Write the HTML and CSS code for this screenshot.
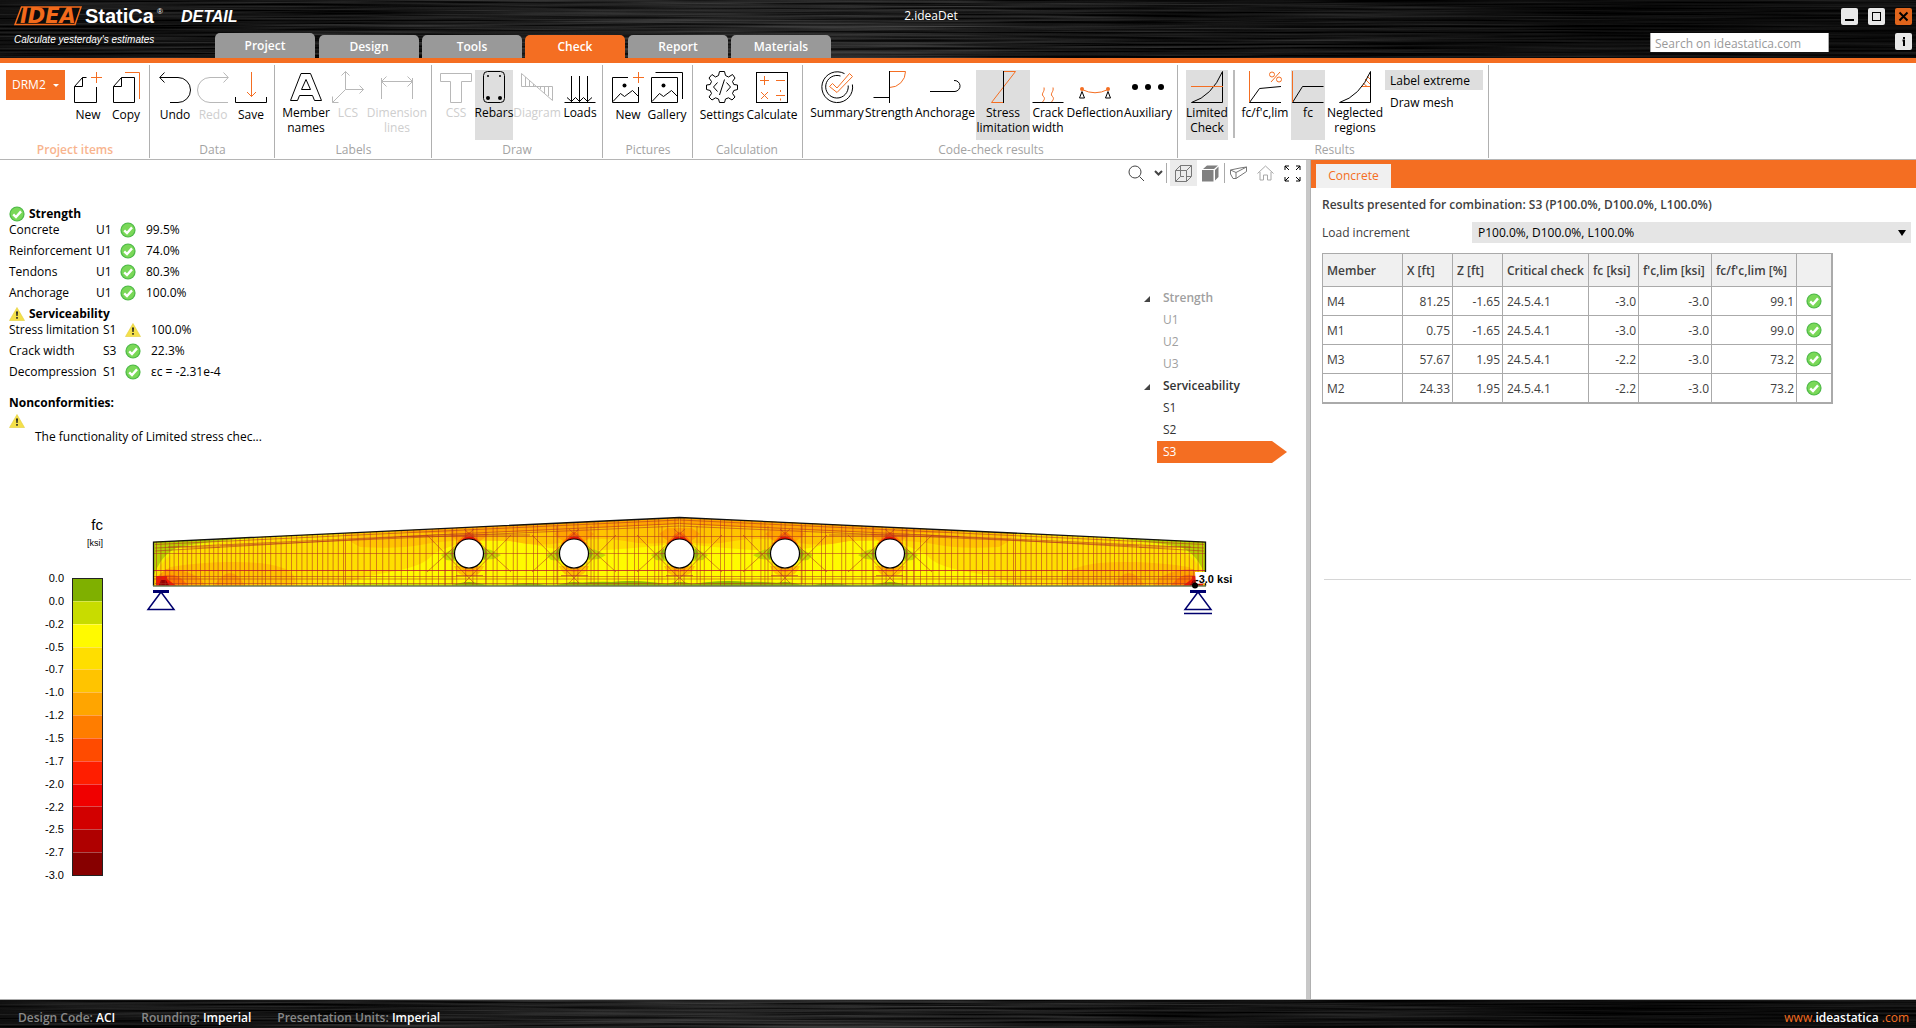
FILE: index.html
```html
<!DOCTYPE html>
<html lang="en">
<head>
<meta charset="utf-8">
<title>IDEA StatiCa Detail - 2.ideaDet</title>
<link rel="stylesheet" href="styles.css">
</head>
<body>
<svg class="defs" width="0" height="0" aria-hidden="true">
  <filter id="brushed" x="0" y="0" width="100%" height="100%" color-interpolation-filters="sRGB">
    <feTurbulence type="fractalNoise" baseFrequency="0.004 0.5" numOctaves="3" seed="7"/>
    <feColorMatrix values=".55 0 0 0 -0.16  .55 0 0 0 -0.16  .55 0 0 0 -0.16  0 0 0 0 1"/>
  </filter>
  <symbol id="ok" viewBox="0 0 16 16"><circle cx="8" cy="8" r="7.6" fill="#4fb94a"/><circle cx="8" cy="8" r="6.4" fill="#7ad858"/><path d="M4.2 8.3L7 11L12 5.4" fill="none" stroke="#fff" stroke-width="2.4"/></symbol>
  <symbol id="warn" viewBox="0 0 16 16"><path d="M8 1.500L15.500 14.500H.500Z" fill="#f4e04a" stroke="#e3cf3c" stroke-width=".6"/><path d="M7 5.500H9L8.600 10H7.400ZM7.200 11H8.800V12.800H7.200Z" fill="#222"/></symbol>
</svg>

<header class="titlebar">
  <svg class="texture" aria-hidden="true"><rect width="100%" height="100%" filter="url(#brushed)"/></svg>
  <div class="brand">
    <svg width="230" height="44" viewBox="0 0 230 44" role="img" aria-label="IDEA StatiCa Detail">
      <path d="M7.500 1H67L61 18.500H1Z" fill="#0c0c0c" stroke="#f26a1b" stroke-width="1.500"/>
      <text x="6" y="17" class="logo-idea">IDEA</text>
      <text x="71" y="17" class="logo-name">StatiCa</text>
      <text x="143" y="8" class="logo-reg">®</text>
      <text x="167" y="16" class="logo-app">DETAIL</text>
      <text x="0" y="37" class="logo-tag">Calculate yesterday's estimates</text>
    </svg>
  </div>
  <div class="titlebar-mid">
    <h1 class="doc-title">2.ideaDet</h1>
    <nav class="tabs">
      <button class="tab tab-first">Project</button>
      <button class="tab">Design</button>
      <button class="tab">Tools</button>
      <button class="tab tab-active">Check</button>
      <button class="tab">Report</button>
      <button class="tab">Materials</button>
    </nav>
  </div>
  <div class="titlebar-tools">
    <div class="win-buttons">
      <button class="win" aria-label="Minimize"><svg width="17" height="17"><path d="M4 12H13" stroke="#000" stroke-width="2"/></svg></button>
      <button class="win" aria-label="Maximize"><svg width="17" height="17"><rect x="4.500" y="4.500" width="8" height="8" fill="none" stroke="#000"/></svg></button>
      <button class="win win-close" aria-label="Close"><svg width="17" height="17"><path d="M4.500 4.500L12.500 12.500M12.500 4.500L4.500 12.500" stroke="#000" stroke-width="2"/></svg></button>
    </div>
    <div class="search-row">
      <input class="search" type="text" placeholder="Search on ideastatica.com" aria-label="Search on ideastatica.com">
      <button class="win" aria-label="Information"><svg width="17" height="17"><path d="M9 4V6M7.500 7.500H9V13" fill="none" stroke="#000" stroke-width="2"/></svg></button>
    </div>
  </div>
</header>

<section class="ribbon">
  <div class="group g1 low">
    <div class="items">
      <button class="project-drop">DRM2<span class="drop-arrow"></span></button>
      <button class="tool w38"><svg class="ic"><path d="M2.500 15.500L10.500 6.500H14.500M10.500 6.500V15.500H2.500V31.500H24.500V16"/><path class="o" d="M24.500 1V12M19 6.500H30"/></svg><span>New</span></button>
      <button class="tool w38"><svg class="ic"><path d="M3.500 15.500L11.500 6.500H24.500V31.500H3.500ZM11.500 6.500V15.500H3.500"/><path class="o" d="M15 1.500H29.500V28"/></svg><span>Copy</span></button>
    </div>
    <h2 class="group-label accent">Project items</h2>
  </div>
  <div class="group g2 low">
    <div class="items">
      <button class="tool w38"><svg class="ic"><path d="M5.500 1.500L.700 6.500L5.500 11.500M1 6.500H19A12.500 12.500 0 0 1 19 31.500H11"/></svg><span>Undo</span></button>
      <button class="tool w38" disabled><svg class="ic"><path d="M26.500 1.500L31.300 6.500L26.500 11.500M31 6.500H13A12.500 12.500 0 0 0 13 31.500H31"/></svg><span>Redo</span></button>
      <button class="tool w38"><svg class="ic"><path d="M.500 26V31.500H31.500V26"/><path class="o" d="M16.500 1V25.500M12 21L16.500 25.500L21 21"/></svg><span>Save</span></button>
    </div>
    <h2 class="group-label">Data</h2>
  </div>
  <div class="group g3">
    <div class="items">
      <button class="tool w50"><svg class="ic"><path d="M.500 29.500L11 2.500H20.500L31.500 29.500H24.500L22.500 24.500H9.500L7.500 29.500ZM11.500 18.500L16 8.500L20.500 18.500Z"/></svg><span>Member<br>names</span></button>
      <button class="tool w34" disabled><svg class="ic"><path d="M13.500 .500V18.500H31.500M13.500 18.500L.500 31.500M9.500 4.500L13.500 .500L17.500 4.500M27.500 14.500L31.500 18.500L27.500 22.500M.500 25.500V31.500H6.500"/></svg><span>LCS</span></button>
      <button class="tool w64" disabled><svg class="ic"><path d="M.500 7V28M31.500 7V28M.500 10.500H31.500M5.500 5.500L.500 10.500L5.500 15.500M26.500 5.500L31.500 10.500L26.500 15.500"/></svg><span>Dimension<br>lines</span></button>
    </div>
    <h2 class="group-label">Labels</h2>
  </div>
  <div class="group g4">
    <div class="items">
      <button class="tool w38" disabled><svg class="ic"><path d="M.500 2.500H31.500V10.500H21.500V31.500H10.500V10.500H.500Z"/></svg><span>CSS</span></button>
      <button class="tool w38 on"><svg class="ic"><rect x="5.500" y=".500" width="21" height="31" rx="4"/><g class="dot"><circle cx="10" cy="5" r="1"/><circle cx="22" cy="5" r="1"/><circle cx="10" cy="27" r="2"/><circle cx="22" cy="27" r="2"/></g></svg><span>Rebars</span></button>
      <button class="tool w48" disabled><svg class="ic"><path d="M.500 2.500V15.500H31.500V29.500ZM4.500 6V15M8.500 9V15M12.500 13V15M19.500 16V18M23.500 16V22M27.500 16V25"/></svg><span>Diagram</span></button>
      <button class="tool w38"><svg class="ic"><path d="M.500 31.500H31.500M7.500 5V31M15.500 5V31M23.500 5V31M3 26.500L7.500 30.500L11.500 26.500L15.500 30.500L19.500 26.500L23.500 30.500L28 26.500"/></svg><span>Loads</span></button>
    </div>
    <h2 class="group-label">Draw</h2>
  </div>
  <div class="group g5 low">
    <div class="items">
      <button class="tool w38"><svg class="ic"><path d="M16 6.500H.500V31.500H26.500V16M1 30.500L8.500 22.500L12.500 25.500L20.500 19.500L26.500 25.500"/><circle class="dot" cx="12.500" cy="14.500" r="2"/><path class="o" d="M26.500 1V12M21 6.500H32"/></svg><span>New</span></button>
      <button class="tool w40"><svg class="ic"><path d="M.500 6.500H26.500V31.500H.500ZM1 30.500L8.500 22.500L12.500 25.500L20.500 19.500L26.500 25.500M4.500 1.500H31.500V28"/><circle class="dot" cx="12.500" cy="14.500" r="2"/></svg><span>Gallery</span></button>
    </div>
    <h2 class="group-label">Pictures</h2>
  </div>
  <div class="group g6 low">
    <div class="items">
      <button class="tool w50"><svg class="ic"><path d="M13.500 .500H18.500L19.500 4.500L22.500 6L26.500 3.500L29 7L26.500 10.500L27.800 13.500L31.500 14V18.500L27.800 19.500L26.500 22.500L29 26L26 29L22.500 26.800L19.500 28L18.500 31.500H13.500L12.500 28L9.500 26.800L6 29L3 26L5.500 22.500L4.200 19.500L.500 18.500V14L4.200 13.500L5.500 10.500L3 7L6 3.500L9.500 6L12.500 4.500ZM11.500 11.500L7.500 16L11.500 20.500M20.500 11.500L24.500 16L20.500 20.500M18.500 8.500L13.500 24"/></svg><span>Settings</span></button>
      <button class="tool w50"><svg class="ic"><rect x=".500" y="1.500" width="31" height="30"/><path class="o" d="M4 9.500H13M8.500 5V14M20 9.500H29M5 21L12 28M12 21L5 28M20 24.500H29M24.500 19V21M24.500 27.500V29.500"/></svg><span>Calculate</span></button>
    </div>
    <h2 class="group-label">Calculation</h2>
  </div>
  <div class="group g7">
    <div class="items">
      <button class="tool w54"><svg class="ic"><path d="M23.500 2.600A15.400 15.400 0 1 0 31.400 13.500M19.500 5A11.300 11.300 0 1 0 27.200 14.500"/><path class="o" d="M8.500 15.500L11.500 12.500L16 17L28.500 2.500L31.500 5.500L16 21.500Z"/></svg><span>Summary</span></button>
      <button class="tool w50"><svg class="ic"><path class="o" d="M16.500 .500H32.500A16 16 0 0 1 16.500 16.500"/><path d="M.500 26.500H16.500M16.500 0V32"/></svg><span>Strength</span></button>
      <button class="tool w62"><svg class="ic"><path d="M1 20.500H26A5.500 5.500 0 0 0 25 9.500"/></svg><span>Anchorage</span></button>
      <button class="tool w54 on"><svg class="ic"><path class="o" d="M16.500 .500H28.500L4.500 31.500H16.500"/><path d="M16.500 0V32"/></svg><span>Stress<br>limitation</span></button>
      <button class="tool w36"><svg class="ic"><path d="M.500 31.500H31.500"/><path class="o" d="M10.500 31C13 28 13 27 11 25C9 22 13 21 12 16.500M19.500 31C22 28 22 27 20 25C18 22 22 21 21 16.500"/></svg><span>Crack<br>width</span></button>
      <button class="tool w58"><svg class="ic"><path d="M.500 27L3 20.500L5.500 27ZM26.500 27L29 20.500L31.500 27Z"/><path class="o" d="M3 18.500Q16 25 29 18.500"/><circle class="odot" cx="3" cy="18" r="2"/><circle class="odot" cx="29" cy="18" r="2"/></svg><span>Deflection</span></button>
      <button class="tool w48"><svg class="ic"><g class="dot"><circle cx="3" cy="16" r="3"/><circle cx="16" cy="16" r="3"/><circle cx="29" cy="16" r="3"/></g></svg><span>Auxiliary</span></button>
    </div>
    <h2 class="group-label">Code-check results</h2>
  </div>
  <div class="group g8">
    <div class="items">
      <button class="tool w42 on"><svg class="ic"><path d="M.500 31.500H31.500V.500Q21 25 .500 31.500"/><path class="o" d="M0 15.500H32"/></svg><span>Limited<br>Check</span></button>
      <span class="divider"></span>
      <button class="tool w52"><svg class="ic"><path d="M.500 31.500L10.500 17.500L32 15.500M.500 31.500H32"/><path class="o" d="M.500 0V31M31 1L22 11"/><circle class="o" cx="23" cy="3.500" r="2.500"/><circle class="o" cx="30" cy="8.500" r="2.500"/></svg><span>fc/f'c,lim</span></button>
      <button class="tool w34 on"><svg class="ic"><path d="M.500 31.500L10.500 15.500H31.500M.500 31.500H31.500"/><path class="o" d="M.500 0V31"/></svg><span>fc</span></button>
      <button class="tool w60"><svg class="ic"><path class="o" d="M23 15.500H31M24 12L28 15.500M26 8L31 13M28 5L31 8"/><path d="M.500 31.500H31.500V.500Q21 25 .500 31.500"/></svg><span>Neglected<br>regions</span></button>
      <div class="option-list">
        <button class="option on">Label extreme</button>
        <button class="option">Draw mesh</button>
      </div>
    </div>
    <h2 class="group-label">Results</h2>
  </div>
</section>

<main class="workspace">
  <section class="viewport">
    <div class="view-tools">
      <button class="vt vt-zoom" aria-label="Zoom"><svg width="17" height="17"><circle cx="7" cy="7" r="6"/><path d="M11.500 11.500L16 16"/></svg></button>
      <button class="vt vt-more" aria-label="Zoom options"><svg width="9" height="6"><path d="M1 1L4.500 4.500L8 1"/></svg></button>
      <button class="vt vt-box on" aria-label="Wireframe"><svg class="gray" width="17" height="17"><path d="M.500 5.500H11.500V16.500H.500ZM.500 5.500L5.500 .500H16.500V11.500L11.500 16.500M11.500 5.500L16.500 .500M5.500 .500V11.500M5.500 11.500L.500 16.500M5.500 11.500H9M12 11.500H16"/></svg></button>
      <button class="vt vt-box" aria-label="Solid"><svg width="17" height="17"><path d="M0 5H11.500V16.500H0ZM1 4L5 .500H16L12 4ZM13 5L16.500 1.500V12L13 15.500Z" fill="#808080" stroke="none"/></svg></button>
      <button class="vt vt-box vt-split" aria-label="Perspective"><svg class="gray" width="17" height="14"><path d="M.500 4L10 2L16.500 1V5.500L6 12.500H3L.500 8ZM.500 4L6 6.500L16.500 1M6 6.500V12.500"/></svg></button>
      <button class="vt vt-box" aria-label="Home view"><svg class="gray light" width="17" height="16"><path d="M.500 8.500L8.500 1L16.500 8.500M3 7V15H6.500V10H10.500V15H14V7"/></svg></button>
      <button class="vt vt-box" aria-label="Fit to window"><svg class="bold" width="17" height="17"><path d="M5 1H1V5M1 1L5 5M12 1H16V5M16 1L12 5M5 16H1V12M1 16L5 12M12 16H16V12M16 16L12 12"/></svg></button>
    </div>

    <div class="info-row">
      <div class="summary">
        <h3 class="check-head"><svg class="st"><use href="#ok"/></svg>Strength</h3>
        <table class="checks">
          <tr><th scope="row">Concrete</th><td>U1</td><td><svg class="st"><use href="#ok"/></svg></td><td>99.5%</td></tr>
          <tr><th scope="row">Reinforcement</th><td>U1</td><td><svg class="st"><use href="#ok"/></svg></td><td>74.0%</td></tr>
          <tr><th scope="row">Tendons</th><td>U1</td><td><svg class="st"><use href="#ok"/></svg></td><td>80.3%</td></tr>
          <tr><th scope="row">Anchorage</th><td>U1</td><td><svg class="st"><use href="#ok"/></svg></td><td>100.0%</td></tr>
        </table>
        <h3 class="check-head"><svg class="st"><use href="#warn"/></svg>Serviceability</h3>
        <table class="checks wide">
          <tr><th scope="row">Stress limitation</th><td>S1</td><td><svg class="st"><use href="#warn"/></svg></td><td>100.0%</td></tr>
          <tr><th scope="row">Crack width</th><td>S3</td><td><svg class="st"><use href="#ok"/></svg></td><td>22.3%</td></tr>
          <tr><th scope="row">Decompression</th><td>S1</td><td><svg class="st"><use href="#ok"/></svg></td><td>εc = -2.31e-4</td></tr>
        </table>
        <h3 class="nonconf">Nonconformities:</h3>
        <svg class="st nonconf-icon"><use href="#warn"/></svg>
        <p class="nonconf-text">The functionality of Limited stress chec...</p>
      </div>
      <ul class="tree">
        <li class="tree-head muted">Strength</li>
        <li class="muted">U1</li>
        <li class="muted">U2</li>
        <li class="muted">U3</li>
        <li class="tree-head">Serviceability</li>
        <li>S1</li>
        <li>S2</li>
        <li class="selected">S3</li>
      </ul>
    </div>

    <div class="model">
      <div class="legend">
        <div class="legend-title">fc</div>
        <div class="legend-unit">[ksi]</div>
        <div class="legend-scale">
          <ol class="legend-values">
            <li>0.0</li><li>0.0</li><li>-0.2</li><li>-0.5</li><li>-0.7</li><li>-1.0</li><li>-1.2</li><li>-1.5</li><li>-1.7</li><li>-2.0</li><li>-2.2</li><li>-2.5</li><li>-2.7</li><li>-3.0</li>
          </ol>
          <div class="legend-bar"><i class="c1"></i><i class="c2"></i><i class="c3"></i><i class="c4"></i><i class="c5"></i><i class="c6"></i><i class="c7"></i><i class="c8"></i><i class="c9"></i><i class="c10"></i><i class="c11"></i><i class="c12"></i><i class="c13"></i></div>
        </div>
      </div>
      <svg class="beam" viewBox="110 510 1196 120" role="img" aria-label="Concrete stress in the beam">
        <defs>
          <clipPath id="halfclip"><path d="M153.500 542L679.500 517.500V586H153.500Z"/></clipPath>
          <!-- stress field around one opening, centred on x = 0 -->
          <g id="field">
            <path d="M-20 534Q-8 545 0 545T20 534L12 528H-12Z" fill="#ffa500"/>
            <path d="M-13 544L-4 534Q0 530 4 534L13 544Z" fill="#ff7200"/>
            <path d="M-12 546Q-7 537 0 536.500T12 546Z" fill="#f21000"/>
            <path d="M-13 548L-20 551L-28 555L-23 560L-13 561ZM13 548L22 550L32 555L25 559L13 560Z" fill="#c4dc00"/>
            <path d="M-15 548L-19 554L-15 560ZM15 548L19 554L15 560Z" fill="#8cbc10"/>
            <path d="M-15 566Q-12 576 0 576T15 566Z" fill="#ffc400"/>
            <path d="M-8 567Q-5 572 0 572T8 567Z" fill="#ffa500"/>
            <path d="M-18 585.500Q-8 582 0 582T18 585.500Z" fill="#8fb800"/>
          </g>
          <g id="bars">
            <path d="M42 535L-5 583M-42 535L5 583M42 572L-5 529M-42 572L5 529"/>
            <path d="M-17 526V584M17 526V584" />
            <path d="M-13 575.500H14"/>
          </g>
          <g id="half" clip-path="url(#halfclip)">
            <rect x="153" y="515" width="527" height="72" fill="#ffde00"/>
            <path d="M340 587Q355 578 390 572T432 555Q440 550 455 545Q500 536 540 546T679.500 543V587Z" fill="#fffa00"/>
            <path d="M679.500 515V541Q650 546 625 541T560 543Q535 547 510 541L470 540Q440 541 420 545T360 547Q345 540 345 532L300 532L440 524Z" fill="#ffc400"/>
            <path d="M679.500 515V524L580 529L520 532L430 533L400 532L420 526Z" fill="#ffa500"/>
            <path d="M153 587V579L170 567Q215 560 260 563Q290 567 294 576T292 587Z" fill="#ffc400"/>
            <path d="M156 587V578L166 569Q185 569 200 578L206 587ZM213 587Q222 573 230 573T246 587Z" fill="#ffa500"/>
            <path d="M156 587V578Q172 571 182 579L190 587Z" fill="#ff7800"/>
            <path d="M156 587V576H167V579L178 587Z" fill="#f81800"/>
            <path d="M158 587L161 580H166L170 587Z" fill="#960000"/>
            <path d="M153 579Q162 556 184 548L270 536L153 541Z" fill="#f4f200"/>
            <path d="M153 578Q160 556 176 548Q190 544 222 541L250 537L153 541Z" fill="#b9d000"/>
            <path d="M345 587V583.500H679.500V587Z" fill="#c8dc00"/>
            <path d="M507 586Q530 580 548 586ZM553 586Q585 581 612 582Q640 579 679 586ZM460 586Q475 582 488 586Z" fill="#8fb800"/>
            <use href="#field" x="469"/><use href="#field" x="574"/><use href="#field" x="679"/>
            <g class="rebar">
              <path d="M156 560H265" stroke-width="90" stroke-dasharray="1 3.400"/>
              <path d="M265 560H345" stroke-width="90" stroke-dasharray="1 4.200"/>
              <path d="M345 560H445" stroke-width="90" stroke-dasharray="1 5.200"/>
              <path d="M445 560H680" stroke-width="90" stroke-dasharray="1 6.200 1 3 1 8"/>
              <path d="M155 544.500L679.500 520M155 548L679.500 523.500M168 547H220M155 551L435 535H530M220 546L679.500 526M400 536.500H680M154 553.500H680M154 576.500H680M154 579H680M155 583.500H680"/>
              <path class="strong" d="M154 570.500H680"/>
              <use href="#bars" x="469"/><use href="#bars" x="574"/><use href="#bars" x="679"/>
            </g>
          </g>
        </defs>
        <use href="#half"/>
        <use href="#half" transform="translate(1359 0) scale(-1 1)"/>
        <path d="M153.500 586V542L679.500 517.500L1205.500 542V586" fill="none" stroke="#111" stroke-width="1.300"/>
        <path d="M153 586H1206" stroke="#6c7a50" stroke-width="1.500"/>
        <g fill="#fff" stroke="#000" stroke-width="1.200"><circle cx="469" cy="553.500" r="14.500"/><circle cx="574" cy="553.500" r="14.500"/><circle cx="679.500" cy="553.500" r="14.500"/><circle cx="785" cy="553.500" r="14.500"/><circle cx="890" cy="553.500" r="14.500"/></g>
        <g fill="none" stroke="#00006e" stroke-width="1.500">
          <path d="M153 591.500H169M1190 591.500H1206" stroke-width="3"/>
          <path d="M161 592L148 609.500H174ZM1198 592L1185 609.500H1211ZM1184 613.500H1212"/>
        </g>
        <path d="M1195 572H1207V583L1196 584Z" fill="#fff"/>
        <circle cx="1195" cy="585.500" r="3"/>
        <text x="1195" y="583" class="extreme">-3.0 ksi</text>
      </svg>
    </div>
  </section>

  <div class="splitter"></div>

  <aside class="results">
    <div class="results-tabs"><button class="results-tab">Concrete</button></div>
    <div class="results-body">
      <h3 class="results-title">Results presented for combination: S3 (P100.0%, D100.0%, L100.0%)</h3>
      <div class="field-row">
        <label for="increment">Load increment</label>
        <div class="select-wrap"><select id="increment"><option>P100.0%, D100.0%, L100.0%</option></select></div>
      </div>
      <table class="grid">
        <colgroup><col class="k80"><col class="k50"><col class="k50"><col class="k86"><col class="k50"><col class="k73"><col class="k85"><col class="k35"></colgroup>
        <thead><tr><th>Member</th><th>X [ft]</th><th>Z [ft]</th><th>Critical check</th><th>fc [ksi]</th><th>f'c,lim [ksi]</th><th>fc/f'c,lim [%]</th><th></th></tr></thead>
        <tbody>
          <tr><td>M4</td><td class="n">81.25</td><td class="n">-1.65</td><td>24.5.4.1</td><td class="n">-3.0</td><td class="n">-3.0</td><td class="n">99.1</td><td class="s"><svg class="st"><use href="#ok"/></svg></td></tr>
          <tr><td>M1</td><td class="n">0.75</td><td class="n">-1.65</td><td>24.5.4.1</td><td class="n">-3.0</td><td class="n">-3.0</td><td class="n">99.0</td><td class="s"><svg class="st"><use href="#ok"/></svg></td></tr>
          <tr><td>M3</td><td class="n">57.67</td><td class="n">1.95</td><td>24.5.4.1</td><td class="n">-2.2</td><td class="n">-3.0</td><td class="n">73.2</td><td class="s"><svg class="st"><use href="#ok"/></svg></td></tr>
          <tr><td>M2</td><td class="n">24.33</td><td class="n">1.95</td><td>24.5.4.1</td><td class="n">-2.2</td><td class="n">-3.0</td><td class="n">73.2</td><td class="s"><svg class="st"><use href="#ok"/></svg></td></tr>
        </tbody>
      </table>
      <hr class="rule">
    </div>
  </aside>
</main>

<footer class="statusbar">
  <svg class="texture" aria-hidden="true"><rect width="100%" height="100%" filter="url(#brushed)"/></svg>
  <span>Design Code: <b>ACI</b></span>
  <span>Rounding: <b>Imperial</b></span>
  <span>Presentation Units: <b>Imperial</b></span>
  <a class="site" href="#">www.<b>ideastatica</b> .com</a>
</footer>
</body>
</html>
```

FILE: styles.css
```css
* { box-sizing: border-box; }

body {
  margin: 0;
  min-height: 100vh;
  display: flex;
  flex-direction: column;
  font: 12px/16px "Open Sans", "Noto Sans", sans-serif;
  color: #000;
  background: #fff;
}

button, input, select { font: inherit; color: inherit; }
button { border: 0; padding: 0; margin: 0; background: none; }
h1, h2, h3, p, ul, ol { margin: 0; padding: 0; font-size: inherit; font-weight: inherit; list-style: none; }
svg { display: block; }
.defs { position: absolute; }

/* title bar */
.titlebar {
  position: relative;
  display: grid;
  grid-template-columns: 215px 1fr 266px;
  height: 63px;
  border-bottom: 5px solid #f46e22;
  background: #111;
}
.texture { position: absolute; left: 0; top: 0; width: 100%; height: 100%; }
.titlebar::before, .statusbar::before {
  content: "";
  position: absolute;
  inset: 0;
  z-index: 1;
  background: linear-gradient(90deg, rgba(0,0,0,.45), rgba(0,0,0,.3) 15%, rgba(60,60,60,.25) 38%, rgba(0,0,0,.3) 60%, rgba(0,0,0,.6) 85%);
}
.brand, .titlebar-mid, .titlebar-tools { position: relative; z-index: 2; }
.brand { padding: 6px 0 0 14px; }
.brand svg { overflow: visible; }
.logo-idea { font: italic bold 21px "DejaVu Sans", sans-serif; fill: #f26a1b; }
.logo-name { font: bold 20px "Liberation Sans", sans-serif; fill: #fff; }
.logo-reg { font: 8px "Liberation Sans", sans-serif; fill: #fff; }
.logo-app { font: italic bold 16px "Liberation Sans", sans-serif; fill: #fff; }
.logo-tag { font: italic 10px "Liberation Sans", sans-serif; fill: #fff; }

.titlebar-mid { display: flex; flex-direction: column; justify-content: space-between; }
.doc-title { padding: 8px 3px 0 0; text-align: center; color: #fff; }
.tabs { display: flex; align-items: flex-end; gap: 3px; }
.tab {
  width: 100px;
  height: 23px;
  border-radius: 5px 5px 0 0;
  background: #999;
  color: #fff;
  font-weight: 600;
}
.tab-first { height: 25px; margin-right: 1px; }
.tab-active { background: #f46e22; }

.titlebar-tools { display: flex; flex-direction: column; gap: 8px; padding: 8px 4px 0 0; }
.win-buttons { display: flex; justify-content: flex-end; gap: 10px; }
.win { width: 17px; height: 17px; border-radius: 2px; background: #e8e8e8; }
.win-close { background: #e0651c; }
.search-row { display: flex; justify-content: space-between; }
.search { width: 179px; height: 19px; padding: 2px 4px 0; border: 1px solid #aaa; border-width: 0 1px; border-radius: 0; background: #fff; }
.search::placeholder { color: #999; opacity: 1; }

/* ribbon */
.ribbon { display: flex; height: 97px; padding: 2px 0 1px; border-bottom: 1px solid #b5b5b5; }
.group { display: flex; flex-direction: column; justify-content: space-between; border-right: 1px solid #b0b0b0; padding-top: 5px; }
.g1 { width: 150px; padding-left: 6px; }
.g2 { width: 125px; padding-left: 6px; }
.g3 { width: 157px; padding-left: 6px; }
.g4 { width: 171px; padding-left: 5px; }
.g5 { width: 90px; padding-left: 6px; }
.g6 { width: 110px; padding-left: 4px; }
.g7 { width: 375px; padding-left: 7px; }
.g8 { width: 311px; padding-left: 8px; }
.items { display: flex; align-items: flex-start; }
.group-label { padding-right: 5px; text-align: center; color: #a3a3a3; }
.group-label.accent { color: #f8b48e; font-weight: 600; }
.tool {
  display: flex;
  flex-direction: column;
  align-items: center;
  height: 70px;
  padding-top: 1px;
  line-height: 15px;
  white-space: nowrap;
}
.tool span { display: block; text-align: center; padding-top: 2px; }
.low .tool span { padding-top: 4px; }
.tool:disabled { color: #cecece; }
.tool:disabled .ic { stroke: #b8b8b8; }
.on { background: #dedede; }
.w34 { width: 34px; } .w36 { width: 36px; } .w38 { width: 38px; } .w40 { width: 40px; }
.w42 { width: 42px; } .w48 { width: 48px; } .w50 { width: 50px; } .w52 { width: 52px; }
.w54 { width: 54px; } .w58 { width: 58px; } .w60 { width: 60px; } .w62 { width: 62px; } .w64 { width: 64px; }
.ic { width: 32px; height: 32px; flex: none; overflow: visible; fill: none; stroke: #000; }
.ic .o { stroke: #f46e22; }
.ic .dot { fill: #000; stroke: none; }
.ic .odot { fill: #f46e22; stroke: none; }
.project-drop {
  display: flex;
  align-items: center;
  justify-content: space-between;
  width: 59px;
  height: 30px;
  margin-right: 4px;
  padding: 0 6px;
  background: #f46e22;
  color: #fff;
}
.drop-arrow { border: 3px solid transparent; border-top-color: #fff; border-bottom: 0; }
.divider { width: 2px; height: 68px; margin: 0 4px 0 5px; background: #bbb; }
.option-list { display: flex; flex-direction: column; gap: 2px; }
.option { width: 98px; height: 20px; padding: 2px 0 0 5px; text-align: left; }

/* workspace */
.workspace { flex: 1; display: grid; grid-template-columns: 1fr 5px 605px; }
.viewport { display: flex; flex-direction: column; min-width: 0; }
.splitter { background: #c8c8c8; border-right: 1px solid #b0b0b0; }

.view-tools { display: flex; align-items: center; justify-content: flex-end; height: 26px; }
.vt { display: flex; align-items: center; justify-content: center; height: 26px; }
.vt svg { fill: none; stroke: #444; }
.vt svg.gray { stroke: #777; }
.vt svg.light { stroke: #a8a8a8; }
.vt svg.bold { stroke: #000; }
.vt-zoom { width: 27px; }
.vt-more { width: 17px; height: 20px; border-right: 1px solid #aaa; margin-right: 3px; }
.vt-more svg { stroke-width: 2; }
.vt-box { width: 27px; }
.vt-box.on { background: #ebebeb; }
.vt-split { width: 28px; border-left: 1px solid #aaa; height: 20px; }

.info-row { display: flex; justify-content: space-between; }
.summary { padding: 17px 0 0 9px; }
.check-head, .nonconf { font-weight: 700; }
.check-head { display: flex; align-items: center; gap: 4px; height: 16px; padding-top: 6px; }
.st { width: 16px; height: 16px; flex: none; }
.checks { border-collapse: collapse; table-layout: fixed; width: 230px; }
.checks tr { height: 21px; }
.checks th, .checks td { padding: 0; text-align: left; font-weight: 400; white-space: nowrap; }
.checks th { width: 87px; }
.checks.wide th { width: 94px; }
.checks td:nth-child(2) { width: 24px; }
.checks.wide td:nth-child(2) { width: 22px; }
.checks td:nth-child(3) { width: 26px; }
.nonconf { padding-top: 13px; }
.nonconf-icon { margin-top: 2px; }
.nonconf-text { padding-left: 26px; }

.tree { width: 150px; margin: 101px 19px 0 0; color: #333; }
.tree li { position: relative; height: 22px; padding-left: 26px; line-height: 22px; }
.tree .tree-head { font-weight: 600; }
.tree .muted { color: #a0a0a0; }
.tree-head::before {
  content: "";
  position: absolute;
  left: 7px;
  top: 9px;
  border-left: 6px solid transparent;
  border-bottom: 6px solid #444;
}
.tree .selected {
  margin-left: 20px;
  padding-left: 6px;
  color: #fff;
  background: #f46e22;
  clip-path: polygon(0 0, 115px 0, 100% 50%, 115px 100%, 0 100%);
}

.model { display: grid; grid-template-columns: 110px 1fr; align-items: start; margin-top: 47px; }
.beam { width: 100%; }
.rebar { fill: none; stroke: #b03020; stroke-opacity: .55; }
.rebar .strong { stroke: #c01030; stroke-opacity: .8; }
.extreme { font: bold 11px "Liberation Sans", sans-serif; }
.legend { padding: 5px 7px 0 0; font-family: "Liberation Sans", sans-serif; text-align: right; }
.legend-title { font-size: 15px; line-height: 20px; }
.legend-unit { font-size: 9px; }
.legend-scale { display: flex; justify-content: flex-end; align-items: center; gap: 8px; margin-top: 16px; }
.legend-values { display: flex; flex-direction: column; height: 320px; font-size: 11px; line-height: 23px; }
.legend-values li { flex: 1 1 0; min-height: 0; }
.legend-bar { display: flex; flex-direction: column; width: 31px; height: 298px; border: 1px solid #222; }
.legend-bar i { flex: 1; }
.legend-bar i + i { border-top: 1px solid rgba(255,255,255,.3); }
.c1 { background: #7fb000; } .c2 { background: #c8dc00; } .c3 { background: #fffa00; }
.c4 { background: #ffde00; } .c5 { background: #ffc400; } .c6 { background: #ffa500; }
.c7 { background: #ff7d00; } .c8 { background: #ff4b00; } .c9 { background: #ff1e00; }
.c10 { background: #f00000; } .c11 { background: #d20000; } .c12 { background: #af0000; }
.c13 { background: #870000; }

/* results panel */
.results { color: #404040; }
.results-tabs { height: 28px; padding: 4px 0 0 5px; background: #f46e22; }
.results-tab { width: 75px; height: 24px; background: #f0f0f0; color: #f46e22; }
.results-body { padding: 9px 5px 0 11px; }
.results-title { font-weight: 600; }
.field-row { display: flex; align-items: center; margin-top: 9px; }
.field-row label { width: 150px; }
.select-wrap { position: relative; flex: 1; }
.select-wrap select { display: block; width: 100%; height: 21px; padding: 0 6px; border: 0; border-radius: 0; appearance: none; background: #e5e5e5; color: #000; }
.select-wrap::after { content: ""; position: absolute; right: 5px; top: 8px; border: 4px solid transparent; border-top: 6px solid #000; border-bottom: 0; }
.grid { width: 509px; margin-top: 10px; border-collapse: collapse; table-layout: fixed; border: 1px solid #aaa; border-width: 1px 2px 2px 1px; white-space: nowrap; }
.k35 { width: 35px; } .k50 { width: 50px; } .k73 { width: 73px; } .k80 { width: 80px; } .k85 { width: 85px; } .k86 { width: 86px; }
.grid th, .grid td { border: 1px solid #aaa; padding: 2px 2px 0 4px; text-align: left; }
.grid th { height: 33px; background: #f0f0f0; font-weight: 600; }
.grid td { height: 29px; }
.grid .n { text-align: right; }
.grid .s { padding: 0 9px; }
.rule { margin: 175px 0 0 2px; border: 0; border-top: 1px solid #d6d6d6; }

/* status bar */
.statusbar {
  position: relative;
  display: flex;
  gap: 26px;
  height: 29px;
  padding: 10px 7px 0 18px;
  border-top: 1px solid #aaa;
  background: #111;
  color: #888;
  font-weight: 600;
  overflow: hidden;
}
.statusbar span, .site { position: relative; z-index: 2; }
.statusbar b { color: #fff; font-weight: 600; }
.site { margin-left: auto; color: #f46e22; font-weight: 400; text-decoration: none; }
```
